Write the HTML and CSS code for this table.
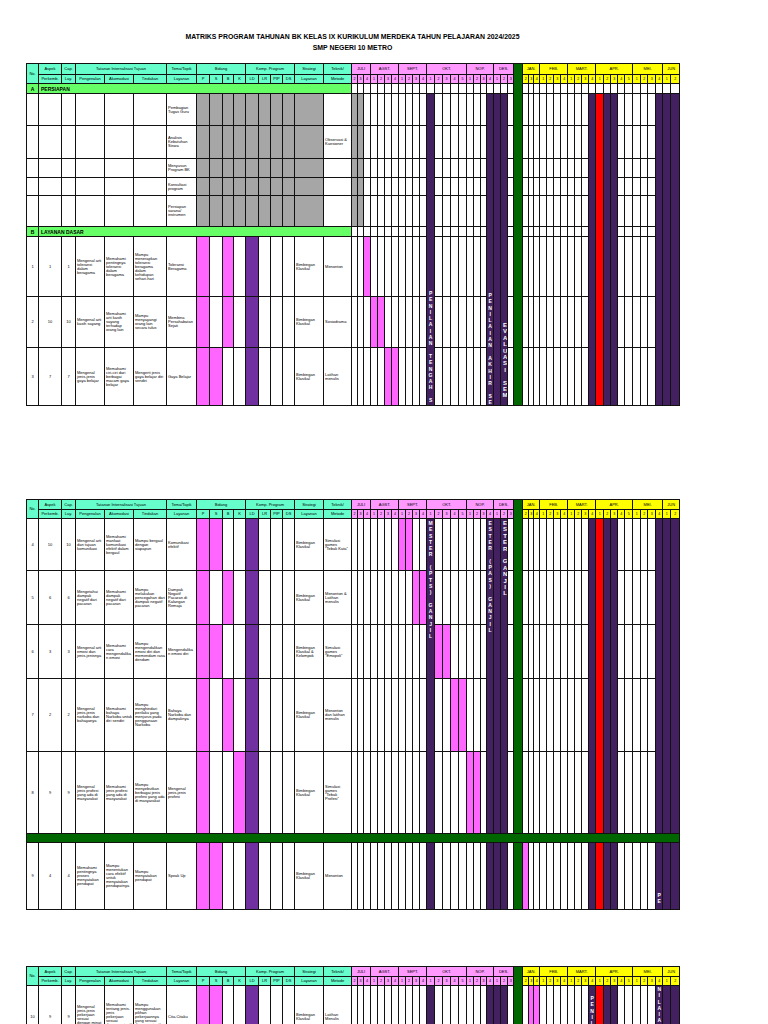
FILE: index.html
```html
<!DOCTYPE html>
<html lang="id">
<head>
<meta charset="utf-8">
<title>Matriks Program Tahunan BK</title>
<link rel="stylesheet" href="styles.css">
</head>
<body>
<div class="doc">
  <div class="title">MATRIKS PROGRAM TAHUNAN BK KELAS IX KURIKULUM MERDEKA TAHUN PELAJARAN 2024/2025<br>SMP NEGERI 10 METRO</div>
  <div id="sheet1" class="sheet sheet1"></div>
  <div id="sheet2" class="sheet sheet2"></div>
  <div id="sheet3" class="sheet sheet3"></div>
</div>
<script src="script.js"></script>
</body>
</html>
```

FILE: styles.css
```css
html, body { margin: 0; padding: 0; background: #fff; overflow: hidden; }
body { font-family: "Liberation Sans", Arial, sans-serif; color: #000; }
.doc { padding-top: 31px; }
.title { margin-left: 26px; width: 653px; text-align: center; font-weight: bold; font-size: 6.9px; line-height: 11px; }
.sheet { margin-left: 26px; }
.sheet1 { margin-top: 10px; }
.sheet2 { margin-top: 93px; }
.sheet3 { margin-top: 56px; }
.grid { border-collapse: collapse; table-layout: fixed; width: 653px; }
.grid td { border: 1px solid #111; padding: 0; font-size: 4px; line-height: 4px; vertical-align: middle; overflow: hidden; }
.grid .hd { text-align: center; white-space: nowrap; }
.grid .sub { font-size: 3.6px; }
.teal { background: #66ffcc; }
.m-pink { background: #ff99ff; }
.m-yellow { background: #ffff00; }
.grid .sec { background: #66ff66; font-weight: bold; font-size: 5px; padding-left: 2px; }
.grid .sec-l { text-align: center; padding-left: 0; }
.grid .num { text-align: center; }
.grid .txt { text-align: left; padding: 0 1px; overflow-wrap: anywhere; }
.gray { background: #a6a6a6; }
.mag { background: #ff66ff; }
.ld { background: #7030a0; }
.pink { background: #ff66ff; }
.purple { background: #43205f; }
.red { background: #ff0000; }
.dgreen { background: #006600; }
.grid .vcell { vertical-align: top; }
.vtext { writing-mode: vertical-lr; text-orientation: upright; white-space: pre; overflow: hidden; color: #fff; font-weight: bold; font-size: 5px; line-height: 6px; letter-spacing: 0.3px; width: 6px; margin-left: auto; margin-right: auto; }
.vtext.big { font-size: 6px; line-height: 7px; width: 7px; letter-spacing: 0.4px; }
```

FILE: script.js
```js
(function () {
  var W = [12,23,14,29,29,33,30,13,13,11,12,13,12,12,12,29,28,
           6,6,7, 7,7,7,7, 7,7,7,7, 8,8,8,8,8, 7,7,6,7, 7,7,6,
           9,
           6,5,6, 7,7,7,7, 7,7,7,7, 8,7,7,7,8, 8,7,8,7, 8,9];
  var N = W.length;
  var MONTHS = [
    {k:'JUL', n:'JULI', s:[2,3,4], c:'m-pink'},
    {k:'AGS', n:'AGST.', s:[1,2,3,4], c:'m-pink'},
    {k:'SEP', n:'SEPT.', s:[1,2,3,4], c:'m-pink'},
    {k:'OKT', n:'OKT.', s:[1,2,3,4,5], c:'m-pink'},
    {k:'NOP', n:'NOP.', s:[1,2,3,4], c:'m-pink'},
    {k:'DES', n:'DES.', s:[1,2,3], c:'m-pink'},
    {green:true},
    {k:'JAN', n:'JAN.', s:[2,3,4], c:'m-yellow'},
    {k:'FEB', n:'FEB.', s:[1,2,3,4], c:'m-yellow'},
    {k:'MAR', n:'MART.', s:[1,2,3,4], c:'m-yellow'},
    {k:'APR', n:'APR.', s:[1,2,3,4,5], c:'m-yellow'},
    {k:'MEI', n:'MEI.', s:[1,2,3,4], c:'m-yellow'},
    {k:'JUN', n:'JUN', s:[1,2], c:'m-yellow'}
  ];
  var KEY = {};
  var monthCells = [];
  var ci = 17;
  MONTHS.forEach(function (m) {
    if (m.green) { KEY.GREEN = ci; ci++; return; }
    var start = ci;
    m.s.forEach(function (s) { KEY[m.k + s] = ci; ci++; });
    monthCells.push({start: start, span: m.s.length, name: m.n, cls: m.c, subs: m.s});
  });
  var LK = {P:7, S:8, B:9, K:10, LD:11, LR:12, PIP:13, DS:14};

  function rowCells(row) {
    var cells = new Array(N);
    function put(c, cls, html, span) { cells[c] = {cls: cls, html: html || '', span: span || 1}; }
    var c;
    if (row.t === 'head1') {
      put(1, 'hd teal', 'Aspek'); put(2, 'hd teal', 'Cap.');
      put(3, 'hd teal', 'Tatanan Internalisasi Tujuan', 3);
      put(6, 'hd teal', 'Tema/Topik'); put(7, 'hd teal', 'Bidang', 4);
      put(11, 'hd teal', 'Komp. Program', 4);
      put(15, 'hd teal', 'Strategi'); put(16, 'hd teal', 'Teknik/');
      monthCells.forEach(function (m) { put(m.start, 'hd ' + m.cls, m.name, m.span); });
    } else if (row.t === 'head2') {
      put(1, 'hd teal', 'Perkemb.'); put(2, 'hd teal', 'Lay.');
      put(3, 'hd teal', 'Pengenalan'); put(4, 'hd teal', 'Akomodasi');
      put(5, 'hd teal', 'Tindakan'); put(6, 'hd teal', 'Layanan');
      ['P','S','B','K','LD','LR','PIP','DS'].forEach(function (t, i) { put(7 + i, 'hd teal', t); });
      put(15, 'hd teal', 'Layanan'); put(16, 'hd teal', 'Metode');
      monthCells.forEach(function (m) {
        m.subs.forEach(function (s, i) { put(m.start + i, 'hd sub ' + m.cls, String(s)); });
      });
    } else if (row.t === 'sec') {
      put(0, 'sec sec-l', row.letter);
      put(1, 'sec', row.title, 16);
      for (c = 17; c < N; c++) put(c, '');
    } else if (row.t === 'band') {
      put(0, 'dgreen', '', N);
    } else {
      put(0, 'num', row.no || ''); put(1, 'num', row.a || ''); put(2, 'num', row.a || '');
      put(3, 'txt', row.p || ''); put(4, 'txt', row.k || '');
      put(5, 'txt', row.ti || ''); put(6, 'txt', row.l || '');
      for (c = 7; c <= 14; c++) put(c, row.gray ? 'gray' : '');
      (row.bid || []).forEach(function (b) { put(LK[b], b === 'LD' ? 'ld' : 'mag'); });
      put(15, 'txt' + (row.gray ? ' gray' : ''), row.s || '');
      put(16, 'txt', row.m || '');
      for (c = 17; c < N; c++) put(c, '');
      (row.pink || []).forEach(function (k) { put(KEY[k], 'pink'); });
      (row.grayM || []).forEach(function (k) { put(KEY[k], 'gray'); });
    }
    return cells;
  }

  function build(spec, host) {
    var table = document.createElement('table');
    table.className = 'grid';
    var cg = document.createElement('colgroup');
    W.forEach(function (w) {
      var col = document.createElement('col');
      col.style.width = w + 'px';
      cg.appendChild(col);
    });
    table.appendChild(cg);
    var tb = document.createElement('tbody');
    table.appendChild(tb);
    var covered = {};
    spec.rows.forEach(function (row, r) {
      var tr = document.createElement('tr');
      tr.style.height = row.h + 'px';
      var cells = rowCells(row);
      var c = 0;
      while (c < N) {
        if (covered[r + ':' + c]) { c++; continue; }
        var band = null;
        for (var i = 0; i < spec.bands.length; i++) {
          if (spec.bands[i].col === c && spec.bands[i].from === r) { band = spec.bands[i]; break; }
        }
        var td = document.createElement('td');
        if (band) {
          td.className = band.cls;
          var span = band.to - band.from + 1;
          if (span > 1) td.rowSpan = span;
          for (var rr = band.from + 1; rr <= band.to; rr++) covered[rr + ':' + c] = true;
          if (band.html) td.innerHTML = band.html;
          if (band.text) {
            var total = 0;
            for (var q = band.from; q <= band.to; q++) total += spec.rows[q].h;
            var d = document.createElement('div');
            d.className = 'vtext' + (band.big ? ' big' : '');
            d.style.marginTop = band.off + 'px';
            d.style.height = Math.max(0, total - band.off - 2) + 'px';
            d.textContent = band.text;
            td.appendChild(d);
            td.className += ' vcell';
          }
          tr.appendChild(td);
          c++;
          continue;
        }
        var cell = cells[c] || {cls: '', html: '', span: 1};
        if (cell.cls) td.className = cell.cls;
        if (cell.span > 1) td.colSpan = cell.span;
        td.innerHTML = cell.html;
        tr.appendChild(td);
        c += cell.span;
      }
      tb.appendChild(tr);
    });
    host.appendChild(table);
  }

  function purpleBands(from, to, texts) {
    var arr = [];
    ['OKT1','NOP4','DES1','DES2','MAR4','APR1','APR2','APR3','MEI4','JUN1','JUN2'].forEach(function (k) {
      var t = (texts && texts[k]) || {};
      arr.push({col: KEY[k], from: from, to: to, cls: k === 'APR1' ? 'red' : 'purple',
                text: t.text, off: t.off || 0, big: t.big});
    });
    return arr;
  }
  function headBands(greenTo) {
    return [
      {col: 0, from: 0, to: 1, cls: 'hd teal', html: 'No.'},
      {col: KEY.GREEN, from: 0, to: greenTo, cls: 'dgreen'}
    ];
  }

  var BK = 'Bimbingan Klasikal';
  var GM = ['JUL2', 'JUL3'];

  var s1 = {
    rows: [
      {t: 'head1', h: 11}, {t: 'head2', h: 9},
      {t: 'sec', h: 10, letter: 'A', title: 'PERSIAPAN'},
      {h: 32, gray: 1, grayM: GM, l: 'Pembagian Tugas Guru'},
      {h: 33, gray: 1, grayM: GM, l: 'Analisis Kebutuhan Siswa', m: 'Observasi &amp; Kuesioner'},
      {h: 19, gray: 1, grayM: GM, l: 'Menyusun Program BK'},
      {h: 18, gray: 1, grayM: GM, l: 'Konsultasi program'},
      {h: 31, gray: 1, grayM: GM, l: 'Persiapan sarana/ instrumen'},
      {t: 'sec', h: 10, letter: 'B', title: 'LAYANAN DASAR'},
      {h: 60, no: '1', a: '1', p: 'Mengenal arti toleransi dalam beragama',
       k: 'Memahami pentingnya toleransi dalam beragama',
       ti: 'Mampu menerapkan toleransi beragama dalam kehidupan sehari-hari',
       l: 'Toleransi Beragama', bid: ['P','B','LD'], s: BK, m: 'Menonton', pink: ['JUL4']},
      {h: 51, no: '2', a: '10', p: 'Mengenal arti kasih sayang',
       k: 'Memahami arti kasih sayang terhadap orang lain',
       ti: 'Mampu menyayangi orang lain secara tulus',
       l: 'Membina Persahabatan Sejati', bid: ['P','B','LD'], s: BK, m: 'Sosiodrama', pink: ['AGS1','AGS2']},
      {h: 58, no: '3', a: '7', p: 'Mengenal jenis-jenis gaya belajar',
       k: 'Memahami ciri-ciri dari berbagai macam gaya belajar',
       ti: 'Mengerti jenis gaya belajar diri sendiri',
       l: 'Gaya Belajar', bid: ['P','S','LD'], s: BK, m: 'Latihan menulis', pink: ['AGS3','AGS4']}
    ]
  };
  s1.bands = headBands(11).concat(purpleBands(3, 11, {
    OKT1: {text: 'PENILAIAN TENGAH SE', off: 196},
    NOP4: {text: 'PENILAIAN AKHIR SEM', off: 198},
    DES2: {text: 'EVALUASI SEM', off: 228, big: 1}
  }));

  var s2 = {
    rows: [
      {t: 'head1', h: 10}, {t: 'head2', h: 9},
      {h: 52, no: '4', a: '10', p: 'Mengenal arti dan tujuan komunikasi',
       k: 'Memahami manfaat komunikasi efektif dalam bergaul',
       ti: 'Mampu bergaul dengan siapapun', l: 'Komunikasi efektif',
       bid: ['P','S','LD'], s: BK, m: 'Simulasi games &quot;Tebak Kata&quot;', pink: ['SEP1','SEP2']},
      {h: 54, no: '5', a: '6', p: 'Mengetahui dampak negatif dari pacaran',
       k: 'Memahami dampak negatif dari pacaran',
       ti: 'Mampu melakukan pencegahan dari dampak negatif pacaran',
       l: 'Dampak Negatif Pacaran di Kalangan Remaja',
       bid: ['P','B','LD'], s: BK, m: 'Menonton &amp; Latihan menulis', pink: ['SEP3','SEP4']},
      {h: 54, no: '6', a: '3', p: 'Mengenal arti emosi dan jenis-jenisnya',
       k: 'Memahami cara mengendalikan emosi',
       ti: 'Mampu mengendalikan emosi diri dan memendam rasa dendam',
       l: 'Mengendalikan emosi diri',
       bid: ['P','S','LD'], s: 'Bimbingan Klasikal &amp; Kelompok', m: 'Simulasi games &quot;Emopoli&quot;', pink: ['OKT2','OKT3']},
      {h: 73, no: '7', a: '2', p: 'Mengenal jenis-jenis narkoba dan bahayanya',
       k: 'Memahami bahaya Narkoba untuk diri sendiri',
       ti: 'Mampu menghindari perilaku yang menjurus pada penggunaan Narkoba',
       l: 'Bahaya Narkoba dan dampaknya',
       bid: ['P','B','LD'], s: BK, m: 'Menonton dan latihan menulis', pink: ['OKT4','OKT5']},
      {h: 82, no: '8', a: '9', p: 'Mengenal jenis profesi yang ada di masyarakat',
       k: 'Memahami jenis profesi yang ada di masyarakat',
       ti: 'Mampu menyebutkan berbagai jenis profesi yang ada di masyarakat',
       l: 'Mengenal jenis-jenis profesi',
       bid: ['P','K','LD'], s: BK, m: 'Simulasi games &quot;Tebak Profesi&quot;', pink: ['NOP1','NOP2']},
      {t: 'band', h: 9},
      {h: 67, no: '9', a: '4', p: 'Memahami pentingnya proses menyatakan pendapat',
       k: 'Mampu menentukan cara efektif untuk menyatakan pendapatnya',
       ti: 'Mampu menyatakan pendapat', l: 'Speak Up',
       bid: ['P','S','LD'], s: BK, m: 'Menonton', pink: ['JAN2']}
    ]
  };
  s2.bands = headBands(6).concat(purpleBands(2, 6, {
    OKT1: {text: 'MESTER (PTS) GANJIL', off: 1},
    NOP4: {text: 'ESTER (PAS) GANJIL', off: 1},
    DES2: {text: 'ESTER GANJIL', off: 1, big: 1}
  })).concat([{col: KEY.GREEN, from: 8, to: 8, cls: 'dgreen'}]).concat(purpleBands(8, 8, {
    MEI4: {text: 'PE', off: 49}
  }));

  var s3 = {
    rows: [
      {t: 'head1', h: 10}, {t: 'head2', h: 9},
      {h: 62, no: '10', a: '9', p: 'Mengenal jenis-jenis pekerjaan sesuai dengan minat / bakatnya',
       k: 'Memahami tentang jenis-jenis pekerjaan sesuai dengan minat/ bakatnya',
       ti: 'Mampu menggunakan pilihan pekerjaannya yang sesuai dengan minat/ bakatnya',
       l: 'Cita-Citaku', bid: ['P','S','LD'], s: BK, m: 'Latihan Menulis', pink: ['JAN3','JAN4']}
    ]
  };
  s3.bands = headBands(2).concat(purpleBands(2, 2, {
    MAR4: {text: 'PENILAIAN', off: 9},
    MEI4: {text: 'NILAIAN', off: 0}
  }));

  build(s1, document.getElementById('sheet1'));
  build(s2, document.getElementById('sheet2'));
  build(s3, document.getElementById('sheet3'));
})();
```
